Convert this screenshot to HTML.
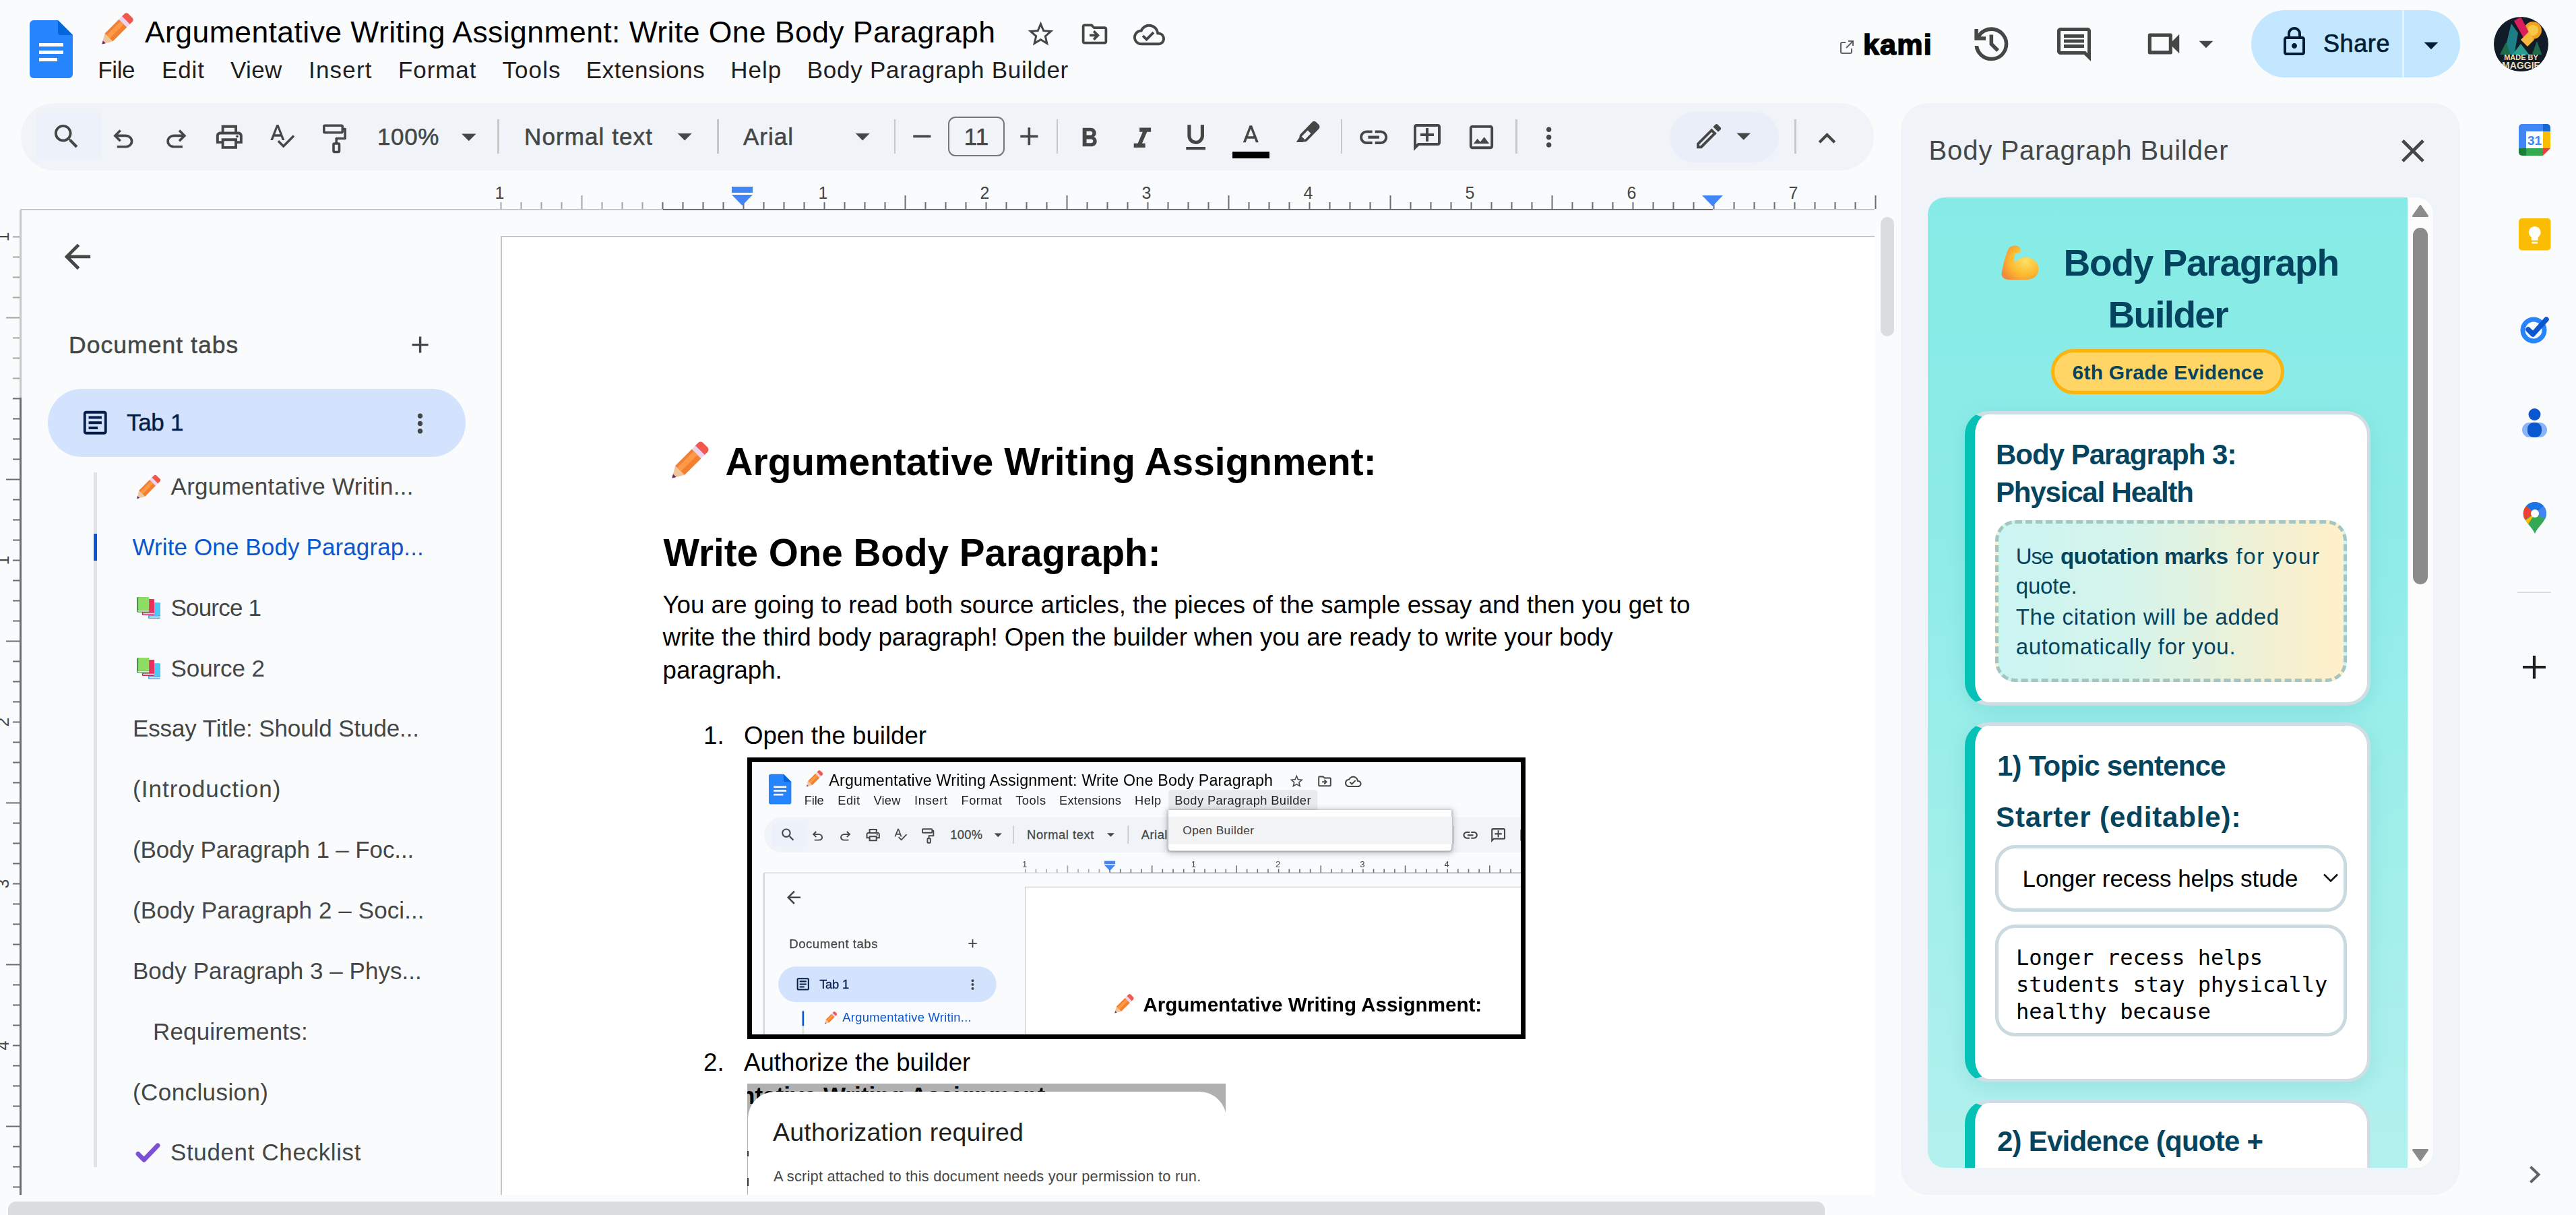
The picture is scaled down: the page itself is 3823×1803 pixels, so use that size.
<!DOCTYPE html>
<html lang="en">
<head>
<meta charset="utf-8">
<title>Argumentative Writing Assignment: Write One Body Paragraph - Google Docs</title>
<style>
*{box-sizing:border-box;margin:0;padding:0}
html,body{width:3823px;height:1803px;overflow:hidden;background:#f9fbfd}
body{font-family:"Liberation Sans",sans-serif;color:#444746;position:relative}
.abs{position:absolute}
.t{position:absolute;white-space:nowrap;line-height:1}
svg{position:absolute;display:block;overflow:visible}
.ic{fill:#444746}
/* header */
.title{left:215px;top:26px;font-size:44.5px;color:#000}
.menu{top:85.5px;font-size:35px;color:#1f1f1f}
/* toolbar */
.tb{left:31px;top:153px;width:2750px;height:100px;border-radius:50px;background:#f0f4f9}
.tbtxt{font-size:35px;color:#444746;top:185px;-webkit-text-stroke:.55px #444746}
.sep{position:absolute;top:177px;width:2.5px;height:51px;background:#c7c7c7}
/* ruler */
.rn{position:absolute;top:273.5px;margin-left:-2px;font-size:25px;color:#444746;line-height:1;transform:translateX(-50%)}
/* left panel */
.li{position:absolute;white-space:nowrap;line-height:1;font-size:35px;color:#444746}
/* doc */
.doc{font-family:"Liberation Sans",sans-serif;color:#000}
</style>
</head>
<body>
<!-- ===== HEADER ===== -->
<svg class="abs" style="left:44px;top:30px" width="64" height="86" viewBox="0 0 64 86">
  <path d="M6 0h36l22 22v58a6 6 0 0 1-6 6H6a6 6 0 0 1-6-6V6a6 6 0 0 1 6-6z" fill="#2684fc"/>
  <path d="M42 0l22 22H46a4 4 0 0 1-4-4z" fill="#0066da"/>
  <rect x="14" y="34" width="36" height="5" fill="#fff"/><rect x="14" y="45" width="36" height="5" fill="#fff"/><rect x="14" y="56" width="27" height="5" fill="#fff"/>
</svg>
<!-- pencil emoji -->
<svg style="left:146px;top:18px" width="53" height="53" viewBox="-4.5 -4.5 57 57"><g transform="rotate(45 24 24)"><rect x="15" y="-8" width="18" height="14" rx="4.5" fill="#f4574c"/><rect x="15" y="2" width="18" height="7" fill="#ead5f2"/><rect x="15" y="9" width="18" height="32" fill="#f47f2f"/><rect x="19" y="9" width="7" height="32" fill="#fc9a4a"/><path d="M15 41h18l-9 15z" fill="#f1c59b"/><path d="M21 51h6l-3 5z" fill="#5b2a6b"/></g></svg>
<div class="t title" style="letter-spacing:0.43px">Argumentative Writing Assignment: Write One Body Paragraph</div>
<svg class="ic" style="left:1522px;top:28px" width="45" height="45" viewBox="0 0 24 24"><path d="M22 9.24l-7.19-.62L12 2 9.19 8.63 2 9.24l5.46 4.73L5.82 21 12 17.27 18.18 21l-1.63-7.03L22 9.24zM12 15.4l-3.76 2.27 1-4.28-3.32-2.88 4.38-.38L12 6.1l1.71 4.04 4.38.38-3.32 2.88 1 4.28L12 15.4z"/></svg>
<svg class="ic" style="left:1602px;top:28px" width="45" height="45" viewBox="0 0 24 24"><path d="M20 6h-8l-2-2H4c-1.1 0-2 .9-2 2v12c0 1.1.9 2 2 2h16c1.1 0 2-.9 2-2V8c0-1.1-.9-2-2-2zm0 12H4V6h5.17l2 2H20v10zm-7.84-4H8v-2h4.16l-1.59-1.59L11.99 9 16 13.01 11.99 17l-1.41-1.41L12.16 14z"/></svg>
<svg class="ic" style="left:1682px;top:28px" width="47" height="47" viewBox="0 0 24 24"><path d="M19.35 10.04C18.67 6.59 15.64 4 12 4 9.11 4 6.6 5.64 5.35 8.04 2.34 8.36 0 10.91 0 14c0 3.31 2.69 6 6 6h13c2.76 0 5-2.24 5-5 0-2.64-2.05-4.78-4.65-4.96zM19 18H6c-2.21 0-4-1.79-4-4 0-2.05 1.53-3.76 3.56-3.97l1.07-.11.5-.95C8.08 7.14 9.94 6 12 6c2.62 0 4.88 1.86 5.39 4.43l.3 1.5 1.53.11c1.56.1 2.78 1.41 2.78 2.96 0 1.65-1.35 3-3 3zm-9-3.82l-2.09-2.09L6.5 13.5 10 17l6.01-6.01-1.41-1.41z"/></svg>
<div class="t menu" style="left:145.3px;letter-spacing:-0.40px">File</div>
<div class="t menu" style="left:240px;letter-spacing:0.90px">Edit</div>
<div class="t menu" style="left:342px;letter-spacing:0.36px">View</div>
<div class="t menu" style="left:458px;letter-spacing:1.21px">Insert</div>
<div class="t menu" style="left:591px;letter-spacing:0.91px">Format</div>
<div class="t menu" style="left:745.5px;letter-spacing:1.07px">Tools</div>
<div class="t menu" style="left:869.7px;letter-spacing:0.55px">Extensions</div>
<div class="t menu" style="left:1084.3px;letter-spacing:1.01px">Help</div>
<div class="t menu" style="left:1197.7px;letter-spacing:0.76px">Body Paragraph Builder</div>
<!-- right side of header -->
<svg style="left:2729px;top:58px" width="24" height="24" viewBox="0 0 24 24"><path d="M10 5H5a2 2 0 0 0-2 2v12a2 2 0 0 0 2 2h12a2 2 0 0 0 2-2v-5M14 3h7v7M21 3l-10 10" fill="none" stroke="#5f6368" stroke-width="2"/></svg>
<div class="t" style="left:2765px;top:45px;font-size:43px;font-weight:700;color:#000;letter-spacing:1.2px;-webkit-text-stroke:1.6px #000">kami</div>
<svg class="ic" style="left:2921.7px;top:31.7px" width="66.7" height="66.7" viewBox="0 0 24 24"><path d="M12 21q-3.45 0-6.012-2.287T3.05 13H5.1q.35 2.6 2.313 4.3T12 19q2.925 0 4.963-2.037T19 12q0-2.925-2.037-4.962T12 5q-1.725 0-3.225.8T6.25 8H9v2H3V4h2v2.35q1.275-1.6 3.113-2.475T12 3q1.875 0 3.513.713t2.85 1.924q1.212 1.213 1.925 2.85T21 12q0 1.875-.712 3.513t-1.925 2.85q-1.213 1.212-2.85 1.925T12 21Zm2.8-4.8L11 12.4V7h2v4.6l3.2 3.2-1.4 1.4Z"/></svg>
<svg class="ic" style="left:3048px;top:36px" width="60" height="60" viewBox="0 0 24 24"><path d="M21.99 4c0-1.1-.89-2-1.99-2H4c-1.1 0-2 .9-2 2v12c0 1.1.9 2 2 2h14l4 4-.01-18zM20 4v13.17L18.83 16H4V4h16zM6 12h12v2H6zm0-3h12v2H6zm0-3h12v2H6z"/></svg>
<svg class="ic" style="left:3180px;top:34px" width="62" height="62" viewBox="0 0 24 24"><path d="M15 8v8H5V8h10m1-2H4c-.55 0-1 .45-1 1v10c0 .55.45 1 1 1h12c.55 0 1-.45 1-1v-3.5l4 4v-11l-4 4V7c0-.55-.45-1-1-1z"/></svg>
<svg class="ic" style="left:3249px;top:40px" width="50" height="50" viewBox="0 0 24 24"><path d="M7 10l5 5 5-5z"/></svg>
<div class="abs" style="left:3341px;top:15px;width:310px;height:100px;border-radius:50px;background:#c2e7ff"></div>
<div class="abs" style="left:3565px;top:15px;width:3px;height:100px;background:#e4f3ff"></div>
<svg style="left:3381px;top:38px;fill:#001d35" width="48" height="48" viewBox="0 0 24 24"><path d="M18 8h-1V6c0-2.76-2.24-5-5-5S7 3.24 7 6v2H6c-1.1 0-2 .9-2 2v10c0 1.1.9 2 2 2h12c1.1 0 2-.9 2-2V10c0-1.1-.9-2-2-2zM9 6c0-1.66 1.34-3 3-3s3 1.34 3 3v2H9V6zm9 14H6V10h12v10zm-6-3c1.1 0 2-.9 2-2s-.9-2-2-2-2 .9-2 2 .9 2 2 2z"/></svg>
<div class="t" style="left:3448px;top:47px;font-size:36px;color:#001d35;font-weight:400;letter-spacing:.6px;-webkit-text-stroke:.7px #001d35">Share</div>
<svg style="left:3583px;top:42px;fill:#001d35" width="50" height="50" viewBox="0 0 24 24"><path d="M7 10l5 5 5-5z"/></svg>
<!-- avatar -->
<svg class="abs" style="left:3701px;top:25px" width="81" height="81" viewBox="0 0 81 81">
  <defs><clipPath id="avc"><circle cx="40.5" cy="40.5" r="40.5"/></clipPath></defs>
  <g clip-path="url(#avc)">
    <rect width="81" height="81" fill="#121c28"/>
    <circle cx="58" cy="20" r="13" fill="#f2a01e"/><circle cx="58" cy="20" r="8" fill="#f7c948"/>
    <path d="M14 58L26 10l10 14-6 34z" fill="#1d7f86"/>
    <path d="M30 6l10-6 16 30-8 8z" fill="#d81e5b"/>
    <path d="M40 34l12-12 8 12-10 10z" fill="#f6b93b"/>
    <path d="M8 58l10-20 8 20zM56 58l8-22 8 22z" fill="#1f6b4a"/>
    <path d="M26 58l14-18 14 18z" fill="#2a9d8f"/>
    <path d="M0 56h81v25H0z" fill="#121c28"/>
    <text x="40.5" y="64" text-anchor="middle" font-family="Liberation Sans, sans-serif" font-weight="700" font-size="11" fill="#f0deb8">MADE BY</text>
    <text x="40.5" y="77" text-anchor="middle" font-family="Liberation Sans, sans-serif" font-weight="700" font-size="14" fill="#f0deb8">MAGGIE</text>
  </g>
</svg>
<!-- ===== TOOLBAR ===== -->
<div class="abs tb"></div>
<div class="abs" style="left:54px;top:167px;width:96px;height:70px;background:#edf1fa;border-radius:4px 0 0 4px"></div>
<svg style="left:75.3px;top:178.8px;fill:#444746" width="47.3" height="47.3" viewBox="0 0 24 24"><path d="M15.5 14h-.79l-.28-.27C15.41 12.59 16 11.11 16 9.5 16 5.91 13.09 3 9.5 3S3 5.91 3 9.5 5.91 16 9.5 16c1.61 0 3.09-.59 4.23-1.57l.27.28v.79l5 4.99L20.49 19l-4.99-5zm-6 0C7.01 14 5 11.99 5 9.5S7.01 5 9.5 5 14 7.01 14 9.5 11.99 14 9.5 14z"/></svg>
<svg style="left:160.9px;top:184.5px;fill:#444746" width="43.7" height="43.7" viewBox="0 0 24 24"><path d="M7 19v-2h7.1q1.575 0 2.738-1T18 13.5q0-1.5-1.163-2.5T14.1 10H7.8l2.6 2.6L9 14 4 9l5-5 1.4 1.4L7.8 8h6.3q2.425 0 4.163 1.575T20 13.5q0 2.35-1.738 3.925T14.1 19H7Z"/></svg>
<svg style="left:239.9px;top:184.5px;fill:#444746" width="43.7" height="43.7" viewBox="0 0 24 24"><path d="M17 19v-2H9.9q-1.575 0-2.738-1T6 13.5q0-1.5 1.162-2.5T9.9 10h6.3l-2.6 2.6L15 14l5-5-5-5-1.4 1.4L16.2 8H9.9Q7.475 8 5.738 9.575T4 13.5q0 2.35 1.738 3.925T9.9 19H17Z"/></svg>
<svg style="left:317.1px;top:180.1px;fill:#444746" width="46.7" height="46.7" viewBox="0 0 24 24"><path d="M19 8h-1V3H6v5H5c-1.66 0-3 1.34-3 3v6h4v4h12v-4h4v-6c0-1.66-1.34-3-3-3zM8 5h8v3H8V5zm8 14H8v-4h8v4zm2-4v-2H6v2H4v-4c0-.55.45-1 1-1h14c.55 0 1 .45 1 1v4h-2z M17 11.5a1 1 0 1 0 2 0a1 1 0 1 0-2 0z"/></svg>
<svg style="left:396.7px;top:180.2px;fill:#444746" width="42.0" height="42.0" viewBox="0 0 24 24"><path d="M12.45 16h2.09L9.43 3H7.57L2.46 16h2.09l1.12-3h5.64l1.14 3zm-6.02-5L8.5 5.48 10.57 11H6.43zm15.16.59l-8.09 8.09L9.83 16l-1.41 1.41 5.09 5.09L23 13l-1.41-1.41z"/></svg>
<svg style="left:476px;top:182px" width="42" height="48" viewBox="0 0 42 48"><g fill="none" stroke="#444746" stroke-width="3.6" stroke-linejoin="round"><rect x="4.8" y="4.3" width="27.5" height="10.5" rx="1.5"/><path d="M32.3 9.5H36.2V23.5H23.2V30"/><rect x="19" y="31" width="8.5" height="12.5" rx="1.5"/></g></svg>
<div class="t tbtxt" style="left:560px;letter-spacing:.6px">100%</div>
<svg style="left:669.7px;top:176.6px;fill:#444746" width="51.6" height="51.6" viewBox="0 0 24 24"><path d="M7 10l5 5 5-5z"/></svg>
<div class="sep" style="left:738px"></div>
<div class="t tbtxt" style="left:778px;letter-spacing:1.1px">Normal text</div>
<svg style="left:990.8px;top:177.2px;fill:#444746" width="50.4" height="50.4" viewBox="0 0 24 24"><path d="M7 10l5 5 5-5z"/></svg>
<div class="sep" style="left:1064px"></div>
<div class="t tbtxt" style="left:1103px;letter-spacing:1px">Arial</div>
<svg style="left:1254.8px;top:177.2px;fill:#444746" width="50.4" height="50.4" viewBox="0 0 24 24"><path d="M7 10l5 5 5-5z"/></svg>
<div class="sep" style="left:1326.5px"></div>
<svg style="left:1345.7px;top:179.5px;fill:#444746" width="44.6" height="44.6" viewBox="0 0 24 24"><path d="M19 13H5v-2h14v2z"/></svg>
<div class="abs" style="left:1407px;top:173px;width:84px;height:58.5px;border:2.5px solid #747775;border-radius:11px"></div>
<div class="t tbtxt" style="left:1407px;width:84px;text-align:center">11</div>
<svg style="left:1504.7px;top:179.7px;fill:#444746" width="44.6" height="44.6" viewBox="0 0 24 24"><path d="M19 13h-6v6h-2v-6H5v-2h6V5h2v6h6v2z"/></svg>
<div class="sep" style="left:1567.5px"></div>
<svg style="left:1593.1px;top:181.5px;fill:#444746" width="46.9" height="46.9" viewBox="0 0 24 24"><path d="M15.6 10.79c.97-.67 1.65-1.77 1.65-2.79 0-2.26-1.75-4-4-4H7v14h7.04c2.09 0 3.71-1.7 3.71-3.79 0-1.52-.86-2.82-2.15-3.42zM10 6.5h3c.83 0 1.5.67 1.5 1.5s-.67 1.5-1.5 1.5h-3v-3zm3.5 9H10v-3h3.5c.83 0 1.5.67 1.5 1.5s-.67 1.5-1.5 1.5z"/></svg>
<svg style="left:1670.4px;top:180.5px;fill:#444746" width="50.8" height="50.8" viewBox="0 0 24 24"><path d="M10 4v3h2.21l-3.42 8H6v3h8v-3h-2.21l3.42-8H18V4z"/></svg>
<svg style="left:1750.1px;top:179.4px;fill:#444746" width="49.3" height="49.3" viewBox="0 0 24 24"><path d="M12 17c3.31 0 6-2.69 6-6V3h-2.5v8c0 1.93-1.57 3.5-3.5 3.5S8.5 12.93 8.5 11V3H6v8c0 3.31 2.69 6 6 6zm-7 2v2h14v-2H5z"/></svg>
<svg style="left:1835.4px;top:181.0px;fill:#444746" width="42.6" height="42.6" viewBox="0 0 24 24"><path d="M11 3L5.5 17h2.25l1.12-3h6.25l1.12 3h2.25L13 3h-2zm-1.38 9L12 5.67 14.38 12H9.62z"/></svg>
<div class="abs" style="left:1829px;top:224.5px;width:55px;height:10px;background:#000"></div>
<svg style="left:1900px;top:165px" width="80" height="70" viewBox="0 0 80 70"><path d="M23.7 46H34.2L35.5 43 29 38z" fill="#444746"/><g transform="rotate(-45.9 43.5 30.25)"><rect x="26.6" y="23.15" width="33.8" height="14.2" rx="4.5" fill="#444746"/><rect x="30.1" y="27" width="12.8" height="6.5" fill="#f0f4f9"/></g></svg>
<div class="sep" style="left:1989.5px"></div>
<svg style="left:2014.3px;top:179.4px;fill:#444746" width="49.3" height="49.3" viewBox="0 0 24 24"><path d="M3.9 12c0-1.71 1.39-3.1 3.1-3.1h4V7H7c-2.76 0-5 2.24-5 5s2.24 5 5 5h4v-1.9H7c-1.71 0-3.1-1.39-3.1-3.1zM8 13h8v-2H8v2zm9-6h-4v1.9h4c1.71 0 3.1 1.39 3.1 3.1s-1.39 3.1-3.1 3.1h-4V17h4c2.76 0 5-2.24 5-5s-2.24-5-5-5z"/></svg>
<svg style="left:2094.0px;top:180.0px;fill:#444746" width="48.0" height="48.0" viewBox="0 0 24 24"><path d="M2 4c0-1.1.9-2 2-2h16c1.1 0 2 .9 2 2v12c0 1.1-.9 2-2 2H6l-4 4V4zm2 13.17L5.17 16H20V4H4v13.17zM11 5h2v4h4v2h-4v4h-2v-4H7V9h4z"/></svg>
<svg style="left:2174.8px;top:180.2px;fill:#444746" width="47.0" height="47.0" viewBox="0 0 24 24"><path d="M19 5v14H5V5h14m0-2H5c-1.1 0-2 .9-2 2v14c0 1.1.9 2 2 2h14c1.1 0 2-.9 2-2V5c0-1.1-.9-2-2-2zm-4.86 8.86l-3 3.87L9 13.14 6 17h12l-3.86-5.14z"/></svg>
<div class="sep" style="left:2249px"></div>
<svg style="left:2275.9px;top:181.2px;fill:#444746" width="45.3" height="45.3" viewBox="0 0 24 24"><path d="M12 8c1.1 0 2-.9 2-2s-.9-2-2-2-2 .9-2 2 .9 2 2 2zm0 2c-1.1 0-2 .9-2 2s.9 2 2 2 2-.9 2-2-.9-2-2-2zm0 6c-1.1 0-2 .9-2 2s.9 2 2 2 2-.9 2-2-.9-2-2-2z"/></svg>
<div class="abs" style="left:2478px;top:165.5px;width:162px;height:75px;border-radius:38px;background:#e9eef9"></div>
<svg style="left:2512.0px;top:177.9px;fill:#444746" width="48.2" height="48.2" viewBox="0 0 24 24"><path d="M14.06 9.02l.92.92L5.92 19H5v-.92l9.06-9.06M17.66 3c-.25 0-.51.1-.7.29l-1.83 1.83 3.75 3.75 1.83-1.83c.39-.39.39-1.02 0-1.41l-2.34-2.34c-.2-.2-.45-.29-.71-.29zm-3.6 3.19L3 17.25V21h3.75L17.81 9.94l-3.75-3.75z"/></svg>
<svg style="left:2563.0px;top:177.0px;fill:#444746" width="49.4" height="49.4" viewBox="0 0 24 24"><path d="M7 10l5 5 5-5z"/></svg>
<div class="sep" style="left:2663px"></div>
<svg style="left:2686.4px;top:180.1px;fill:#444746" width="51.0" height="51.0" viewBox="0 0 24 24"><path d="M12 8l-6 6 1.41 1.41L12 10.83l4.59 4.58L18 14z"/></svg>
<!-- ===== RULERS ===== -->
<div class="abs" style="left:30px;top:309.5px;width:953.5px;height:2.5px;background:#c4c7c5"></div>
<div class="abs" style="left:983.5px;top:309.5px;width:1558.0px;height:2.5px;background:#6b6e6c"></div>
<div class="abs" style="left:2541.5px;top:309.5px;width:240.5px;height:2.5px;background:#c4c7c5"></div>
<svg style="left:0;top:0" width="2800" height="320" viewBox="0 0 2800 320"><rect x="742.5" y="300" width="2" height="10" fill="#a3a6a4"/><rect x="772.5" y="300" width="2" height="10" fill="#a3a6a4"/><rect x="802.5" y="300" width="2" height="10" fill="#a3a6a4"/><rect x="832.5" y="300" width="2" height="10" fill="#a3a6a4"/><rect x="862.5" y="290" width="2" height="20" fill="#a3a6a4"/><rect x="892.5" y="300" width="2" height="10" fill="#a3a6a4"/><rect x="922.5" y="300" width="2" height="10" fill="#a3a6a4"/><rect x="952.5" y="300" width="2" height="10" fill="#a3a6a4"/><rect x="982.5" y="300" width="2" height="10" fill="#6b6e6c"/><rect x="1012.5" y="300" width="2" height="10" fill="#6b6e6c"/><rect x="1042.5" y="300" width="2" height="10" fill="#6b6e6c"/><rect x="1072.5" y="300" width="2" height="10" fill="#6b6e6c"/><rect x="1102.5" y="290" width="2" height="20" fill="#6b6e6c"/><rect x="1132.5" y="300" width="2" height="10" fill="#6b6e6c"/><rect x="1162.5" y="300" width="2" height="10" fill="#6b6e6c"/><rect x="1192.5" y="300" width="2" height="10" fill="#6b6e6c"/><rect x="1222.5" y="300" width="2" height="10" fill="#6b6e6c"/><rect x="1252.5" y="300" width="2" height="10" fill="#6b6e6c"/><rect x="1282.5" y="300" width="2" height="10" fill="#6b6e6c"/><rect x="1312.5" y="300" width="2" height="10" fill="#6b6e6c"/><rect x="1342.5" y="290" width="2" height="20" fill="#6b6e6c"/><rect x="1372.5" y="300" width="2" height="10" fill="#6b6e6c"/><rect x="1402.5" y="300" width="2" height="10" fill="#6b6e6c"/><rect x="1432.5" y="300" width="2" height="10" fill="#6b6e6c"/><rect x="1462.5" y="300" width="2" height="10" fill="#6b6e6c"/><rect x="1492.5" y="300" width="2" height="10" fill="#6b6e6c"/><rect x="1522.5" y="300" width="2" height="10" fill="#6b6e6c"/><rect x="1552.5" y="300" width="2" height="10" fill="#6b6e6c"/><rect x="1582.5" y="290" width="2" height="20" fill="#6b6e6c"/><rect x="1612.5" y="300" width="2" height="10" fill="#6b6e6c"/><rect x="1642.5" y="300" width="2" height="10" fill="#6b6e6c"/><rect x="1672.5" y="300" width="2" height="10" fill="#6b6e6c"/><rect x="1702.5" y="300" width="2" height="10" fill="#6b6e6c"/><rect x="1732.5" y="300" width="2" height="10" fill="#6b6e6c"/><rect x="1762.5" y="300" width="2" height="10" fill="#6b6e6c"/><rect x="1792.5" y="300" width="2" height="10" fill="#6b6e6c"/><rect x="1822.5" y="290" width="2" height="20" fill="#6b6e6c"/><rect x="1852.5" y="300" width="2" height="10" fill="#6b6e6c"/><rect x="1882.5" y="300" width="2" height="10" fill="#6b6e6c"/><rect x="1912.5" y="300" width="2" height="10" fill="#6b6e6c"/><rect x="1942.5" y="300" width="2" height="10" fill="#6b6e6c"/><rect x="1972.5" y="300" width="2" height="10" fill="#6b6e6c"/><rect x="2002.5" y="300" width="2" height="10" fill="#6b6e6c"/><rect x="2032.5" y="300" width="2" height="10" fill="#6b6e6c"/><rect x="2062.5" y="290" width="2" height="20" fill="#6b6e6c"/><rect x="2092.5" y="300" width="2" height="10" fill="#6b6e6c"/><rect x="2122.5" y="300" width="2" height="10" fill="#6b6e6c"/><rect x="2152.5" y="300" width="2" height="10" fill="#6b6e6c"/><rect x="2182.5" y="300" width="2" height="10" fill="#6b6e6c"/><rect x="2212.5" y="300" width="2" height="10" fill="#6b6e6c"/><rect x="2242.5" y="300" width="2" height="10" fill="#6b6e6c"/><rect x="2272.5" y="300" width="2" height="10" fill="#6b6e6c"/><rect x="2302.5" y="290" width="2" height="20" fill="#6b6e6c"/><rect x="2332.5" y="300" width="2" height="10" fill="#6b6e6c"/><rect x="2362.5" y="300" width="2" height="10" fill="#6b6e6c"/><rect x="2392.5" y="300" width="2" height="10" fill="#6b6e6c"/><rect x="2422.5" y="300" width="2" height="10" fill="#6b6e6c"/><rect x="2452.5" y="300" width="2" height="10" fill="#6b6e6c"/><rect x="2482.5" y="300" width="2" height="10" fill="#6b6e6c"/><rect x="2512.5" y="300" width="2" height="10" fill="#6b6e6c"/><rect x="2542.5" y="290" width="2" height="20" fill="#6b6e6c"/><rect x="2572.5" y="300" width="2" height="10" fill="#6b6e6c"/><rect x="2602.5" y="300" width="2" height="10" fill="#6b6e6c"/><rect x="2632.5" y="300" width="2" height="10" fill="#6b6e6c"/><rect x="2662.5" y="300" width="2" height="10" fill="#6b6e6c"/><rect x="2692.5" y="300" width="2" height="10" fill="#6b6e6c"/><rect x="2722.5" y="300" width="2" height="10" fill="#6b6e6c"/><rect x="2752.5" y="300" width="2" height="10" fill="#6b6e6c"/><rect x="2782.5" y="290" width="2" height="20" fill="#6b6e6c"/></svg>
<div class="rn" style="left:743.5px">1</div>
<div class="rn" style="left:1223.5px">1</div>
<div class="rn" style="left:1463.5px">2</div>
<div class="rn" style="left:1703.5px">3</div>
<div class="rn" style="left:1943.5px">4</div>
<div class="rn" style="left:2183.5px">5</div>
<div class="rn" style="left:2423.5px">6</div>
<div class="rn" style="left:2663.5px">7</div>
<svg style="left:1086px;top:277px" width="31" height="28" viewBox="0 0 31 28"><rect width="31" height="9" fill="#4285f4"/><path d="M0 12h31L15.5 28z" fill="#4285f4"/></svg>
<svg style="left:2526px;top:289.5px" width="31" height="16" viewBox="0 0 31 16"><path d="M0 0h31L15.5 16z" fill="#4285f4"/></svg>
<div class="abs" style="left:29px;top:312px;width:2.5px;height:278px;background:#c4c7c5"></div>
<div class="abs" style="left:29px;top:590px;width:2.5px;height:1183px;background:#6b6e6c"></div>
<svg style="left:0;top:0" width="32" height="1780" viewBox="0 0 32 1780"><rect x="19" y="350.5" width="10" height="2" fill="#a3a6a4"/><rect x="19" y="380.5" width="10" height="2" fill="#a3a6a4"/><rect x="19" y="410.5" width="10" height="2" fill="#a3a6a4"/><rect x="19" y="440.5" width="10" height="2" fill="#a3a6a4"/><rect x="9" y="470.5" width="20" height="2" fill="#a3a6a4"/><rect x="19" y="500.5" width="10" height="2" fill="#a3a6a4"/><rect x="19" y="530.5" width="10" height="2" fill="#a3a6a4"/><rect x="19" y="560.5" width="10" height="2" fill="#a3a6a4"/><rect x="19" y="590.5" width="10" height="2" fill="#6b6e6c"/><rect x="19" y="620.5" width="10" height="2" fill="#6b6e6c"/><rect x="19" y="650.5" width="10" height="2" fill="#6b6e6c"/><rect x="19" y="680.5" width="10" height="2" fill="#6b6e6c"/><rect x="9" y="710.5" width="20" height="2" fill="#6b6e6c"/><rect x="19" y="740.5" width="10" height="2" fill="#6b6e6c"/><rect x="19" y="770.5" width="10" height="2" fill="#6b6e6c"/><rect x="19" y="800.5" width="10" height="2" fill="#6b6e6c"/><rect x="19" y="830.5" width="10" height="2" fill="#6b6e6c"/><rect x="19" y="860.5" width="10" height="2" fill="#6b6e6c"/><rect x="19" y="890.5" width="10" height="2" fill="#6b6e6c"/><rect x="19" y="920.5" width="10" height="2" fill="#6b6e6c"/><rect x="9" y="950.5" width="20" height="2" fill="#6b6e6c"/><rect x="19" y="980.5" width="10" height="2" fill="#6b6e6c"/><rect x="19" y="1010.5" width="10" height="2" fill="#6b6e6c"/><rect x="19" y="1040.5" width="10" height="2" fill="#6b6e6c"/><rect x="19" y="1070.5" width="10" height="2" fill="#6b6e6c"/><rect x="19" y="1100.5" width="10" height="2" fill="#6b6e6c"/><rect x="19" y="1130.5" width="10" height="2" fill="#6b6e6c"/><rect x="19" y="1160.5" width="10" height="2" fill="#6b6e6c"/><rect x="9" y="1190.5" width="20" height="2" fill="#6b6e6c"/><rect x="19" y="1220.5" width="10" height="2" fill="#6b6e6c"/><rect x="19" y="1250.5" width="10" height="2" fill="#6b6e6c"/><rect x="19" y="1280.5" width="10" height="2" fill="#6b6e6c"/><rect x="19" y="1310.5" width="10" height="2" fill="#6b6e6c"/><rect x="19" y="1340.5" width="10" height="2" fill="#6b6e6c"/><rect x="19" y="1370.5" width="10" height="2" fill="#6b6e6c"/><rect x="19" y="1400.5" width="10" height="2" fill="#6b6e6c"/><rect x="9" y="1430.5" width="20" height="2" fill="#6b6e6c"/><rect x="19" y="1460.5" width="10" height="2" fill="#6b6e6c"/><rect x="19" y="1490.5" width="10" height="2" fill="#6b6e6c"/><rect x="19" y="1520.5" width="10" height="2" fill="#6b6e6c"/><rect x="19" y="1550.5" width="10" height="2" fill="#6b6e6c"/><rect x="19" y="1580.5" width="10" height="2" fill="#6b6e6c"/><rect x="19" y="1610.5" width="10" height="2" fill="#6b6e6c"/><rect x="19" y="1640.5" width="10" height="2" fill="#6b6e6c"/><rect x="9" y="1670.5" width="20" height="2" fill="#6b6e6c"/><rect x="19" y="1700.5" width="10" height="2" fill="#6b6e6c"/><rect x="19" y="1730.5" width="10" height="2" fill="#6b6e6c"/><rect x="19" y="1760.5" width="10" height="2" fill="#6b6e6c"/></svg>
<div class="abs" style="left:-8px;top:339.0px;width:25px;height:25px;font-size:25px;line-height:25px;text-align:center;color:#444746;transform:rotate(-90deg)">1</div>
<div class="abs" style="left:-8px;top:819.0px;width:25px;height:25px;font-size:25px;line-height:25px;text-align:center;color:#444746;transform:rotate(-90deg)">1</div>
<div class="abs" style="left:-8px;top:1059.0px;width:25px;height:25px;font-size:25px;line-height:25px;text-align:center;color:#444746;transform:rotate(-90deg)">2</div>
<div class="abs" style="left:-8px;top:1299.0px;width:25px;height:25px;font-size:25px;line-height:25px;text-align:center;color:#444746;transform:rotate(-90deg)">3</div>
<div class="abs" style="left:-8px;top:1539.0px;width:25px;height:25px;font-size:25px;line-height:25px;text-align:center;color:#444746;transform:rotate(-90deg)">4</div>
<!-- ===== LEFT PANEL ===== -->
<svg style="left:85.6px;top:352.1px;fill:#444746" width="57.8" height="57.8" viewBox="0 0 24 24"><path d="M20 11H7.83l5.59-5.59L12 4l-8 8 8 8 1.41-1.41L7.83 13H20v-2z"/></svg>
<div class="li" style="left:102px;top:494.5px;font-size:35.5px;-webkit-text-stroke:.5px #444746;letter-spacing:1.05px">Document tabs</div>
<svg style="left:603.1px;top:491.4px;fill:#444746" width="41.2" height="41.2" viewBox="0 0 24 24"><path d="M19 13h-6v6h-2v-6H5v-2h6V5h2v6h6v2z"/></svg>
<div class="abs" style="left:71px;top:576.5px;width:620px;height:101px;border-radius:51px;background:#d3e3fd"></div>
<svg style="left:117.8px;top:603.8px;fill:#041e49" width="46.5" height="46.5" viewBox="0 0 24 24"><path d="M19 5v14H5V5h14m0-2H5c-1.1 0-2 .9-2 2v14c0 1.1.9 2 2 2h14c1.1 0 2-.9 2-2V5c0-1.1-.9-2-2-2zm-2 4H7v2h10V7zm0 4H7v2h10v-2zm-3 4H7v2h7v-2z"/></svg>
<div class="li" style="left:188px;top:609px;font-size:35px;color:#041e49;-webkit-text-stroke:.5px #041e49;letter-spacing:-.3px">Tab 1</div>
<svg style="left:600.5px;top:605.5px;fill:#444746" width="45.0" height="45.0" viewBox="0 0 24 24"><path d="M12 8c1.1 0 2-.9 2-2s-.9-2-2-2-2 .9-2 2 .9 2 2 2zm0 2c-1.1 0-2 .9-2 2s.9 2 2 2 2-.9 2-2-.9-2-2-2zm0 6c-1.1 0-2 .9-2 2s.9 2 2 2 2-.9 2-2-.9-2-2-2z"/></svg>
<div class="abs" style="left:139px;top:701px;width:5px;height:1031px;background:#e3e3e3"></div>
<div class="abs" style="left:139px;top:792px;width:5px;height:40px;background:#0b57d0"></div>
<svg style="left:199px;top:703.6px" width="40" height="40" viewBox="-4.5 -4.5 57 57"><g transform="rotate(45 24 24)"><rect x="15" y="-8" width="18" height="14" rx="4.5" fill="#f4574c"/><rect x="15" y="2" width="18" height="7" fill="#ead5f2"/><rect x="15" y="9" width="18" height="32" fill="#f47f2f"/><rect x="19" y="9" width="7" height="32" fill="#fc9a4a"/><path d="M15 41h18l-9 15z" fill="#f1c59b"/><path d="M21 51h6l-3 5z" fill="#5b2a6b"/></g></svg>
<div class="li" style="left:253.5px;top:704.0px;color:#444746;letter-spacing:0.30px">Argumentative Writin...</div>
<div class="li" style="left:196.5px;top:793.8px;color:#0b57d0;letter-spacing:0.12px">Write One Body Paragrap...</div>
<svg style="left:203px;top:886.32px" width="35" height="32.0" viewBox="0 0 35 32"><rect x="17" y="8.4" width="18" height="23.5" rx="1.5" fill="#35b0f2"/><rect x="19" y="8.4" width="16" height="19" rx="1.2" fill="#4cc9f4"/><rect x="18.5" y="28.6" width="16.5" height="2" fill="#e9dcf8"/><rect x="7.8" y="3.1" width="18.2" height="23.9" rx="1.5" fill="#c5245a"/><rect x="9.5" y="3.1" width="16.5" height="19.6" rx="1.2" fill="#e8315f"/><rect x="9.3" y="23.6" width="16.7" height="2" fill="#f3cfe0"/><rect x="0" y="0" width="18.2" height="22.8" rx="1.5" fill="#3f9b4b"/><rect x="2.2" y="0" width="16" height="19" rx="1" fill="#8fdc62"/><rect x="1.5" y="19.6" width="16.7" height="2" fill="#e3efe0"/></svg>
<div class="li" style="left:253.5px;top:883.7px;color:#444746;letter-spacing:-0.81px">Source 1</div>
<svg style="left:203px;top:976.1800000000001px" width="35" height="32.0" viewBox="0 0 35 32"><rect x="17" y="8.4" width="18" height="23.5" rx="1.5" fill="#35b0f2"/><rect x="19" y="8.4" width="16" height="19" rx="1.2" fill="#4cc9f4"/><rect x="18.5" y="28.6" width="16.5" height="2" fill="#e9dcf8"/><rect x="7.8" y="3.1" width="18.2" height="23.9" rx="1.5" fill="#c5245a"/><rect x="9.5" y="3.1" width="16.5" height="19.6" rx="1.2" fill="#e8315f"/><rect x="9.3" y="23.6" width="16.7" height="2" fill="#f3cfe0"/><rect x="0" y="0" width="18.2" height="22.8" rx="1.5" fill="#3f9b4b"/><rect x="2.2" y="0" width="16" height="19" rx="1" fill="#8fdc62"/><rect x="1.5" y="19.6" width="16.7" height="2" fill="#e3efe0"/></svg>
<div class="li" style="left:253.5px;top:973.6px;color:#444746;letter-spacing:-0.08px">Source 2</div>
<div class="li" style="left:197px;top:1063.4px;color:#444746;letter-spacing:-0.11px">Essay Title: Should Stude...</div>
<div class="li" style="left:197px;top:1153.3px;color:#444746;letter-spacing:1.02px">(Introduction)</div>
<div class="li" style="left:197px;top:1243.1px;color:#444746;letter-spacing:-0.12px">(Body Paragraph 1 – Foc...</div>
<div class="li" style="left:197px;top:1333.0px;color:#444746;letter-spacing:0.10px">(Body Paragraph 2 – Soci...</div>
<div class="li" style="left:197px;top:1422.9px;color:#444746;letter-spacing:0.03px">Body Paragraph 3 – Phys...</div>
<div class="li" style="left:227px;top:1512.7px;color:#444746;letter-spacing:0.17px">Requirements:</div>
<div class="li" style="left:197px;top:1602.6px;color:#444746;letter-spacing:0.41px">(Conclusion)</div>
<svg style="left:202px;top:1692.06px" width="35" height="35" viewBox="0 0 36 36"><path d="M3 21l9 9L33 8" fill="none" stroke="#7b4fd6" stroke-width="7" stroke-linecap="round" stroke-linejoin="round"/></svg>
<div class="li" style="left:253px;top:1692.4px;color:#444746;letter-spacing:0.63px">Student Checklist</div>
<!-- ===== DOCUMENT ===== -->
<div class="abs" style="left:742.5px;top:349.5px;width:2039px;height:1423px;background:#fff;border-left:2.5px solid #c4c7c5;border-top:2.5px solid #c4c7c5"></div>
<svg style="left:991px;top:654px" width="62" height="62" viewBox="-4.5 -4.5 57 57"><g transform="rotate(45 24 24)"><rect x="15" y="-8" width="18" height="14" rx="4.5" fill="#f4574c"/><rect x="15" y="2" width="18" height="7" fill="#ead5f2"/><rect x="15" y="9" width="18" height="32" fill="#f47f2f"/><rect x="19" y="9" width="7" height="32" fill="#fc9a4a"/><path d="M15 41h18l-9 15z" fill="#f1c59b"/><path d="M21 51h6l-3 5z" fill="#5b2a6b"/></g></svg>
<div class="t doc" id="h1" style="left:1076.5px;top:658px;font-size:56.67px;font-weight:700;letter-spacing:0.09px">Argumentative Writing Assignment:</div>
<div class="t doc" id="h2" style="left:984.5px;top:793px;font-size:56.67px;font-weight:700;letter-spacing:-0.03px">Write One Body Paragraph:</div>
<div class="t doc" id="p0" style="left:983.5px;top:879.5px;font-size:36.67px">You are going to read both source articles, the pieces of the sample essay and then you get to</div>
<div class="t doc" id="p1" style="left:983.5px;top:928.1px;font-size:36.67px">write the third body paragraph! Open the builder when you are ready to write your body</div>
<div class="t doc" id="p2" style="left:983.5px;top:976.7px;font-size:36.67px">paragraph.</div>
<div class="t doc" style="left:1044px;top:1073.5px;font-size:36.67px">1.</div>
<div class="t doc" style="left:1104px;top:1073.5px;font-size:36.67px">Open the builder</div>
<div class="abs" style="left:1116px;top:1131px;width:1141px;height:404px;overflow:hidden;background:#f9fbfd"><div class="abs" style="left:1.8px;top:1.8px;width:2400px;height:900px;transform:scale(.522);transform-origin:0 0"><div class="abs" style="left:1180px;top:75px;width:424px;height:58px;background:#e8eaed;border-radius:8px 8px 0 0"></div><!-- ===== HEADER ===== -->
<svg class="abs" style="left:44px;top:30px" width="64" height="86" viewBox="0 0 64 86">
  <path d="M6 0h36l22 22v58a6 6 0 0 1-6 6H6a6 6 0 0 1-6-6V6a6 6 0 0 1 6-6z" fill="#2684fc"/>
  <path d="M42 0l22 22H46a4 4 0 0 1-4-4z" fill="#0066da"/>
  <rect x="14" y="34" width="36" height="5" fill="#fff"/><rect x="14" y="45" width="36" height="5" fill="#fff"/><rect x="14" y="56" width="27" height="5" fill="#fff"/>
</svg>
<!-- pencil emoji -->
<svg style="left:146px;top:18px" width="53" height="53" viewBox="-4.5 -4.5 57 57"><g transform="rotate(45 24 24)"><rect x="15" y="-8" width="18" height="14" rx="4.5" fill="#f4574c"/><rect x="15" y="2" width="18" height="7" fill="#ead5f2"/><rect x="15" y="9" width="18" height="32" fill="#f47f2f"/><rect x="19" y="9" width="7" height="32" fill="#fc9a4a"/><path d="M15 41h18l-9 15z" fill="#f1c59b"/><path d="M21 51h6l-3 5z" fill="#5b2a6b"/></g></svg>
<div class="t title" style="letter-spacing:0.43px">Argumentative Writing Assignment: Write One Body Paragraph</div>
<svg class="ic" style="left:1522px;top:28px" width="45" height="45" viewBox="0 0 24 24"><path d="M22 9.24l-7.19-.62L12 2 9.19 8.63 2 9.24l5.46 4.73L5.82 21 12 17.27 18.18 21l-1.63-7.03L22 9.24zM12 15.4l-3.76 2.27 1-4.28-3.32-2.88 4.38-.38L12 6.1l1.71 4.04 4.38.38-3.32 2.88 1 4.28L12 15.4z"/></svg>
<svg class="ic" style="left:1602px;top:28px" width="45" height="45" viewBox="0 0 24 24"><path d="M20 6h-8l-2-2H4c-1.1 0-2 .9-2 2v12c0 1.1.9 2 2 2h16c1.1 0 2-.9 2-2V8c0-1.1-.9-2-2-2zm0 12H4V6h5.17l2 2H20v10zm-7.84-4H8v-2h4.16l-1.59-1.59L11.99 9 16 13.01 11.99 17l-1.41-1.41L12.16 14z"/></svg>
<svg class="ic" style="left:1682px;top:28px" width="47" height="47" viewBox="0 0 24 24"><path d="M19.35 10.04C18.67 6.59 15.64 4 12 4 9.11 4 6.6 5.64 5.35 8.04 2.34 8.36 0 10.91 0 14c0 3.31 2.69 6 6 6h13c2.76 0 5-2.24 5-5 0-2.64-2.05-4.78-4.65-4.96zM19 18H6c-2.21 0-4-1.79-4-4 0-2.05 1.53-3.76 3.56-3.97l1.07-.11.5-.95C8.08 7.14 9.94 6 12 6c2.62 0 4.88 1.86 5.39 4.43l.3 1.5 1.53.11c1.56.1 2.78 1.41 2.78 2.96 0 1.65-1.35 3-3 3zm-9-3.82l-2.09-2.09L6.5 13.5 10 17l6.01-6.01-1.41-1.41z"/></svg>
<div class="t menu" style="left:145.3px;letter-spacing:-0.40px">File</div>
<div class="t menu" style="left:240px;letter-spacing:0.90px">Edit</div>
<div class="t menu" style="left:342px;letter-spacing:0.36px">View</div>
<div class="t menu" style="left:458px;letter-spacing:1.21px">Insert</div>
<div class="t menu" style="left:591px;letter-spacing:0.91px">Format</div>
<div class="t menu" style="left:745.5px;letter-spacing:1.07px">Tools</div>
<div class="t menu" style="left:869.7px;letter-spacing:0.55px">Extensions</div>
<div class="t menu" style="left:1084.3px;letter-spacing:1.01px">Help</div>
<div class="t menu" style="left:1197.7px;letter-spacing:0.76px">Body Paragraph Builder</div>
<!-- ===== TOOLBAR ===== -->
<div class="abs tb"></div>
<div class="abs" style="left:54px;top:167px;width:96px;height:70px;background:#edf1fa;border-radius:4px 0 0 4px"></div>
<svg style="left:75.3px;top:178.8px;fill:#444746" width="47.3" height="47.3" viewBox="0 0 24 24"><path d="M15.5 14h-.79l-.28-.27C15.41 12.59 16 11.11 16 9.5 16 5.91 13.09 3 9.5 3S3 5.91 3 9.5 5.91 16 9.5 16c1.61 0 3.09-.59 4.23-1.57l.27.28v.79l5 4.99L20.49 19l-4.99-5zm-6 0C7.01 14 5 11.99 5 9.5S7.01 5 9.5 5 14 7.01 14 9.5 11.99 14 9.5 14z"/></svg>
<svg style="left:160.9px;top:184.5px;fill:#444746" width="43.7" height="43.7" viewBox="0 0 24 24"><path d="M7 19v-2h7.1q1.575 0 2.738-1T18 13.5q0-1.5-1.163-2.5T14.1 10H7.8l2.6 2.6L9 14 4 9l5-5 1.4 1.4L7.8 8h6.3q2.425 0 4.163 1.575T20 13.5q0 2.35-1.738 3.925T14.1 19H7Z"/></svg>
<svg style="left:239.9px;top:184.5px;fill:#444746" width="43.7" height="43.7" viewBox="0 0 24 24"><path d="M17 19v-2H9.9q-1.575 0-2.738-1T6 13.5q0-1.5 1.162-2.5T9.9 10h6.3l-2.6 2.6L15 14l5-5-5-5-1.4 1.4L16.2 8H9.9Q7.475 8 5.738 9.575T4 13.5q0 2.35 1.738 3.925T9.9 19H17Z"/></svg>
<svg style="left:317.1px;top:180.1px;fill:#444746" width="46.7" height="46.7" viewBox="0 0 24 24"><path d="M19 8h-1V3H6v5H5c-1.66 0-3 1.34-3 3v6h4v4h12v-4h4v-6c0-1.66-1.34-3-3-3zM8 5h8v3H8V5zm8 14H8v-4h8v4zm2-4v-2H6v2H4v-4c0-.55.45-1 1-1h14c.55 0 1 .45 1 1v4h-2z M17 11.5a1 1 0 1 0 2 0a1 1 0 1 0-2 0z"/></svg>
<svg style="left:396.7px;top:180.2px;fill:#444746" width="42.0" height="42.0" viewBox="0 0 24 24"><path d="M12.45 16h2.09L9.43 3H7.57L2.46 16h2.09l1.12-3h5.64l1.14 3zm-6.02-5L8.5 5.48 10.57 11H6.43zm15.16.59l-8.09 8.09L9.83 16l-1.41 1.41 5.09 5.09L23 13l-1.41-1.41z"/></svg>
<svg style="left:476px;top:182px" width="42" height="48" viewBox="0 0 42 48"><g fill="none" stroke="#444746" stroke-width="3.6" stroke-linejoin="round"><rect x="4.8" y="4.3" width="27.5" height="10.5" rx="1.5"/><path d="M32.3 9.5H36.2V23.5H23.2V30"/><rect x="19" y="31" width="8.5" height="12.5" rx="1.5"/></g></svg>
<div class="t tbtxt" style="left:560px;letter-spacing:.6px">100%</div>
<svg style="left:669.7px;top:176.6px;fill:#444746" width="51.6" height="51.6" viewBox="0 0 24 24"><path d="M7 10l5 5 5-5z"/></svg>
<div class="sep" style="left:738px"></div>
<div class="t tbtxt" style="left:778px;letter-spacing:1.1px">Normal text</div>
<svg style="left:990.8px;top:177.2px;fill:#444746" width="50.4" height="50.4" viewBox="0 0 24 24"><path d="M7 10l5 5 5-5z"/></svg>
<div class="sep" style="left:1064px"></div>
<div class="t tbtxt" style="left:1103px;letter-spacing:1px">Arial</div>
<svg style="left:1254.8px;top:177.2px;fill:#444746" width="50.4" height="50.4" viewBox="0 0 24 24"><path d="M7 10l5 5 5-5z"/></svg>
<div class="sep" style="left:1326.5px"></div>
<svg style="left:1345.7px;top:179.5px;fill:#444746" width="44.6" height="44.6" viewBox="0 0 24 24"><path d="M19 13H5v-2h14v2z"/></svg>
<div class="abs" style="left:1407px;top:173px;width:84px;height:58.5px;border:2.5px solid #747775;border-radius:11px"></div>
<div class="t tbtxt" style="left:1407px;width:84px;text-align:center">11</div>
<svg style="left:1504.7px;top:179.7px;fill:#444746" width="44.6" height="44.6" viewBox="0 0 24 24"><path d="M19 13h-6v6h-2v-6H5v-2h6V5h2v6h6v2z"/></svg>
<div class="sep" style="left:1567.5px"></div>
<svg style="left:1593.1px;top:181.5px;fill:#444746" width="46.9" height="46.9" viewBox="0 0 24 24"><path d="M15.6 10.79c.97-.67 1.65-1.77 1.65-2.79 0-2.26-1.75-4-4-4H7v14h7.04c2.09 0 3.71-1.7 3.71-3.79 0-1.52-.86-2.82-2.15-3.42zM10 6.5h3c.83 0 1.5.67 1.5 1.5s-.67 1.5-1.5 1.5h-3v-3zm3.5 9H10v-3h3.5c.83 0 1.5.67 1.5 1.5s-.67 1.5-1.5 1.5z"/></svg>
<svg style="left:1670.4px;top:180.5px;fill:#444746" width="50.8" height="50.8" viewBox="0 0 24 24"><path d="M10 4v3h2.21l-3.42 8H6v3h8v-3h-2.21l3.42-8H18V4z"/></svg>
<svg style="left:1750.1px;top:179.4px;fill:#444746" width="49.3" height="49.3" viewBox="0 0 24 24"><path d="M12 17c3.31 0 6-2.69 6-6V3h-2.5v8c0 1.93-1.57 3.5-3.5 3.5S8.5 12.93 8.5 11V3H6v8c0 3.31 2.69 6 6 6zm-7 2v2h14v-2H5z"/></svg>
<svg style="left:1835.4px;top:181.0px;fill:#444746" width="42.6" height="42.6" viewBox="0 0 24 24"><path d="M11 3L5.5 17h2.25l1.12-3h6.25l1.12 3h2.25L13 3h-2zm-1.38 9L12 5.67 14.38 12H9.62z"/></svg>
<div class="abs" style="left:1829px;top:224.5px;width:55px;height:10px;background:#000"></div>
<svg style="left:1900px;top:165px" width="80" height="70" viewBox="0 0 80 70"><path d="M23.7 46H34.2L35.5 43 29 38z" fill="#444746"/><g transform="rotate(-45.9 43.5 30.25)"><rect x="26.6" y="23.15" width="33.8" height="14.2" rx="4.5" fill="#444746"/><rect x="30.1" y="27" width="12.8" height="6.5" fill="#f0f4f9"/></g></svg>
<div class="sep" style="left:1989.5px"></div>
<svg style="left:2014.3px;top:179.4px;fill:#444746" width="49.3" height="49.3" viewBox="0 0 24 24"><path d="M3.9 12c0-1.71 1.39-3.1 3.1-3.1h4V7H7c-2.76 0-5 2.24-5 5s2.24 5 5 5h4v-1.9H7c-1.71 0-3.1-1.39-3.1-3.1zM8 13h8v-2H8v2zm9-6h-4v1.9h4c1.71 0 3.1 1.39 3.1 3.1s-1.39 3.1-3.1 3.1h-4V17h4c2.76 0 5-2.24 5-5s-2.24-5-5-5z"/></svg>
<svg style="left:2094.0px;top:180.0px;fill:#444746" width="48.0" height="48.0" viewBox="0 0 24 24"><path d="M2 4c0-1.1.9-2 2-2h16c1.1 0 2 .9 2 2v12c0 1.1-.9 2-2 2H6l-4 4V4zm2 13.17L5.17 16H20V4H4v13.17zM11 5h2v4h4v2h-4v4h-2v-4H7V9h4z"/></svg>
<svg style="left:2174.8px;top:180.2px;fill:#444746" width="47.0" height="47.0" viewBox="0 0 24 24"><path d="M19 5v14H5V5h14m0-2H5c-1.1 0-2 .9-2 2v14c0 1.1.9 2 2 2h14c1.1 0 2-.9 2-2V5c0-1.1-.9-2-2-2zm-4.86 8.86l-3 3.87L9 13.14 6 17h12l-3.86-5.14z"/></svg>
<div class="sep" style="left:2249px"></div>
<svg style="left:2275.9px;top:181.2px;fill:#444746" width="45.3" height="45.3" viewBox="0 0 24 24"><path d="M12 8c1.1 0 2-.9 2-2s-.9-2-2-2-2 .9-2 2 .9 2 2 2zm0 2c-1.1 0-2 .9-2 2s.9 2 2 2 2-.9 2-2-.9-2-2-2zm0 6c-1.1 0-2 .9-2 2s.9 2 2 2 2-.9 2-2-.9-2-2-2z"/></svg>
<div class="abs" style="left:2478px;top:165.5px;width:162px;height:75px;border-radius:38px;background:#e9eef9"></div>
<svg style="left:2512.0px;top:177.9px;fill:#444746" width="48.2" height="48.2" viewBox="0 0 24 24"><path d="M14.06 9.02l.92.92L5.92 19H5v-.92l9.06-9.06M17.66 3c-.25 0-.51.1-.7.29l-1.83 1.83 3.75 3.75 1.83-1.83c.39-.39.39-1.02 0-1.41l-2.34-2.34c-.2-.2-.45-.29-.71-.29zm-3.6 3.19L3 17.25V21h3.75L17.81 9.94l-3.75-3.75z"/></svg>
<svg style="left:2563.0px;top:177.0px;fill:#444746" width="49.4" height="49.4" viewBox="0 0 24 24"><path d="M7 10l5 5 5-5z"/></svg>
<div class="sep" style="left:2663px"></div>
<svg style="left:2686.4px;top:180.1px;fill:#444746" width="51.0" height="51.0" viewBox="0 0 24 24"><path d="M12 8l-6 6 1.41 1.41L12 10.83l4.59 4.58L18 14z"/></svg>
<div class="abs" style="left:30px;top:309.5px;width:983.5px;height:2.5px;background:#c4c7c5"></div><div class="abs" style="left:1013.5px;top:309.5px;width:1286.5px;height:2.5px;background:#6b6e6c"></div><svg style="left:0;top:0" width="2300" height="320" viewBox="0 0 2300 320"><rect x="772.0" y="300" width="3" height="10" fill="#a3a6a4"/><rect x="802.0" y="300" width="3" height="10" fill="#a3a6a4"/><rect x="832.0" y="300" width="3" height="10" fill="#a3a6a4"/><rect x="862.0" y="300" width="3" height="10" fill="#a3a6a4"/><rect x="892.0" y="290" width="3" height="20" fill="#a3a6a4"/><rect x="922.0" y="300" width="3" height="10" fill="#a3a6a4"/><rect x="952.0" y="300" width="3" height="10" fill="#a3a6a4"/><rect x="982.0" y="300" width="3" height="10" fill="#a3a6a4"/><rect x="1012.0" y="300" width="3" height="10" fill="#6b6e6c"/><rect x="1042.0" y="300" width="3" height="10" fill="#6b6e6c"/><rect x="1072.0" y="300" width="3" height="10" fill="#6b6e6c"/><rect x="1102.0" y="300" width="3" height="10" fill="#6b6e6c"/><rect x="1132.0" y="290" width="3" height="20" fill="#6b6e6c"/><rect x="1162.0" y="300" width="3" height="10" fill="#6b6e6c"/><rect x="1192.0" y="300" width="3" height="10" fill="#6b6e6c"/><rect x="1222.0" y="300" width="3" height="10" fill="#6b6e6c"/><rect x="1252.0" y="300" width="3" height="10" fill="#6b6e6c"/><rect x="1282.0" y="300" width="3" height="10" fill="#6b6e6c"/><rect x="1312.0" y="300" width="3" height="10" fill="#6b6e6c"/><rect x="1342.0" y="300" width="3" height="10" fill="#6b6e6c"/><rect x="1372.0" y="290" width="3" height="20" fill="#6b6e6c"/><rect x="1402.0" y="300" width="3" height="10" fill="#6b6e6c"/><rect x="1432.0" y="300" width="3" height="10" fill="#6b6e6c"/><rect x="1462.0" y="300" width="3" height="10" fill="#6b6e6c"/><rect x="1492.0" y="300" width="3" height="10" fill="#6b6e6c"/><rect x="1522.0" y="300" width="3" height="10" fill="#6b6e6c"/><rect x="1552.0" y="300" width="3" height="10" fill="#6b6e6c"/><rect x="1582.0" y="300" width="3" height="10" fill="#6b6e6c"/><rect x="1612.0" y="290" width="3" height="20" fill="#6b6e6c"/><rect x="1642.0" y="300" width="3" height="10" fill="#6b6e6c"/><rect x="1672.0" y="300" width="3" height="10" fill="#6b6e6c"/><rect x="1702.0" y="300" width="3" height="10" fill="#6b6e6c"/><rect x="1732.0" y="300" width="3" height="10" fill="#6b6e6c"/><rect x="1762.0" y="300" width="3" height="10" fill="#6b6e6c"/><rect x="1792.0" y="300" width="3" height="10" fill="#6b6e6c"/><rect x="1822.0" y="300" width="3" height="10" fill="#6b6e6c"/><rect x="1852.0" y="290" width="3" height="20" fill="#6b6e6c"/><rect x="1882.0" y="300" width="3" height="10" fill="#6b6e6c"/><rect x="1912.0" y="300" width="3" height="10" fill="#6b6e6c"/><rect x="1942.0" y="300" width="3" height="10" fill="#6b6e6c"/><rect x="1972.0" y="300" width="3" height="10" fill="#6b6e6c"/><rect x="2002.0" y="300" width="3" height="10" fill="#6b6e6c"/><rect x="2032.0" y="300" width="3" height="10" fill="#6b6e6c"/><rect x="2062.0" y="300" width="3" height="10" fill="#6b6e6c"/><rect x="2092.0" y="290" width="3" height="20" fill="#6b6e6c"/><rect x="2122.0" y="300" width="3" height="10" fill="#6b6e6c"/><rect x="2152.0" y="300" width="3" height="10" fill="#6b6e6c"/><rect x="2182.0" y="300" width="3" height="10" fill="#6b6e6c"/><rect x="2212.0" y="300" width="3" height="10" fill="#6b6e6c"/><rect x="2242.0" y="300" width="3" height="10" fill="#6b6e6c"/><rect x="2272.0" y="300" width="3" height="10" fill="#6b6e6c"/></svg><div class="rn" style="left:773.5px">1</div><div class="rn" style="left:1253.5px">1</div><div class="rn" style="left:1493.5px">2</div><div class="rn" style="left:1733.5px">3</div><div class="rn" style="left:1973.5px">4</div><div class="rn" style="left:2213.5px">5</div><svg style="left:998.0px;top:277px" width="31" height="28" viewBox="0 0 31 28"><rect width="31" height="9" fill="#4285f4"/><path d="M0 12h31L15.5 28z" fill="#4285f4"/></svg><div class="abs" style="left:29px;top:312px;width:2.5px;height:600px;background:#c4c7c5"></div><svg style="left:85.6px;top:352.1px;fill:#444746" width="57.8" height="57.8" viewBox="0 0 24 24"><path d="M20 11H7.83l5.59-5.59L12 4l-8 8 8 8 1.41-1.41L7.83 13H20v-2z"/></svg>
<div class="li" style="left:102px;top:494.5px;font-size:35.5px;-webkit-text-stroke:.5px #444746;letter-spacing:1.05px">Document tabs</div><svg style="left:603.1px;top:491.4px;fill:#444746" width="41.2" height="41.2" viewBox="0 0 24 24"><path d="M19 13h-6v6h-2v-6H5v-2h6V5h2v6h6v2z"/></svg>
<div class="abs" style="left:71px;top:576.5px;width:620px;height:101px;border-radius:51px;background:#d3e3fd"></div><svg style="left:117.8px;top:603.8px;fill:#041e49" width="46.5" height="46.5" viewBox="0 0 24 24"><path d="M19 5v14H5V5h14m0-2H5c-1.1 0-2 .9-2 2v14c0 1.1.9 2 2 2h14c1.1 0 2-.9 2-2V5c0-1.1-.9-2-2-2zm-2 4H7v2h10V7zm0 4H7v2h10v-2zm-3 4H7v2h7v-2z"/></svg>
<div class="li" style="left:188px;top:609px;font-size:35px;color:#041e49;-webkit-text-stroke:.5px #041e49;letter-spacing:-.3px">Tab 1</div><svg style="left:600.5px;top:605.5px;fill:#444746" width="45.0" height="45.0" viewBox="0 0 24 24"><path d="M12 8c1.1 0 2-.9 2-2s-.9-2-2-2-2 .9-2 2 .9 2 2 2zm0 2c-1.1 0-2 .9-2 2s.9 2 2 2 2-.9 2-2-.9-2-2-2zm0 6c-1.1 0-2 .9-2 2s.9 2 2 2 2-.9 2-2-.9-2-2-2z"/></svg>
<div class="abs" style="left:139px;top:701px;width:5px;height:200px;background:#e3e3e3"></div><div class="abs" style="left:139px;top:704px;width:5px;height:42px;background:#0b57d0"></div><svg style="left:199px;top:704px" width="40" height="40" viewBox="-4.5 -4.5 57 57"><g transform="rotate(45 24 24)"><rect x="15" y="-8" width="18" height="14" rx="4.5" fill="#f4574c"/><rect x="15" y="2" width="18" height="7" fill="#ead5f2"/><rect x="15" y="9" width="18" height="32" fill="#f47f2f"/><rect x="19" y="9" width="7" height="32" fill="#fc9a4a"/><path d="M15 41h18l-9 15z" fill="#f1c59b"/><path d="M21 51h6l-3 5z" fill="#5b2a6b"/></g></svg>
<div class="li" style="left:253.5px;top:704.4px;color:#0b57d0;letter-spacing:.6px">Argumentative Writin...</div><div class="abs" style="left:772px;top:350px;width:1600px;height:600px;background:#fff;border:2.5px solid #c4c7c5"></div><svg style="left:1021px;top:654px" width="62" height="62" viewBox="-4.5 -4.5 57 57"><g transform="rotate(45 24 24)"><rect x="15" y="-8" width="18" height="14" rx="4.5" fill="#f4574c"/><rect x="15" y="2" width="18" height="7" fill="#ead5f2"/><rect x="15" y="9" width="18" height="32" fill="#f47f2f"/><rect x="19" y="9" width="7" height="32" fill="#fc9a4a"/><path d="M15 41h18l-9 15z" fill="#f1c59b"/><path d="M21 51h6l-3 5z" fill="#5b2a6b"/></g></svg>
<div class="t doc" style="left:1108px;top:658px;font-size:56.67px;font-weight:700">Argumentative Writing Assignment:</div><div class="abs" style="left:1180px;top:132px;width:805px;height:116px;background:#fff;border-radius:0 0 8px 8px;box-shadow:0 4px 16px 4px rgba(60,64,67,.25),0 2px 6px rgba(60,64,67,.3)"></div><div class="abs" style="left:1180px;top:151px;width:805px;height:78px;background:#f1f3f4"></div><div class="t" style="left:1221px;top:174px;font-size:33px;color:#3c4043;letter-spacing:.9px">Open Builder</div></div></div><div class="abs" style="left:1109px;top:1124px;width:1154.5px;height:417.5px;border:7.5px solid #000"></div>
<div class="t doc" style="left:1044px;top:1558.5px;font-size:36.67px">2.</div>
<div class="t doc" style="left:1104px;top:1558.5px;font-size:36.67px">Authorize the builder</div>
<div class="abs" style="left:1109px;top:1608px;width:710px;height:164.5px;background:#b0b0b0;overflow:hidden"><div class="t doc" style="left:-10px;top:-0.5px;font-size:35px;font-weight:700;color:#000;letter-spacing:0.05px">ntative Writing Assignment:</div><div class="abs" style="left:0.5px;top:12px;width:710px;height:200px;background:#fff;border-radius:40px 40px 0 0"></div><div class="abs" style="left:0;top:100px;width:1.5px;height:8px;background:#333"></div><div class="abs" style="left:0;top:140px;width:1.5px;height:12px;background:#333"></div><div class="t" style="left:38px;top:54px;font-size:37.5px;color:#1f1f1f;letter-spacing:0.24px">Authorization required</div><div class="t" style="left:39px;top:126.5px;font-size:21.8px;color:#444746;letter-spacing:0.22px">A script attached to this document needs your permission to run.</div></div>
<div class="abs" style="left:2790.5px;top:322px;width:20.5px;height:177px;border-radius:11px;background:#dadce0"></div>
<div class="abs" style="left:11.5px;top:1782.5px;width:2696px;height:40px;border-radius:12px;background:#dadce0"></div>
<!-- ===== RIGHT PANEL ===== -->
<div class="abs" style="left:2821px;top:153px;width:830px;height:1620px;border-radius:40px;background:#f0f4f9"></div>
<div class="t" style="left:2862.5px;top:202.6px;font-size:40px;font-weight:400;color:#444746;font-family:'Liberation Sans',sans-serif;letter-spacing:0.92px;">Body Paragraph Builder</div>
<svg style="left:3552.3px;top:194.5px;fill:#444746" width="57.9" height="57.9" viewBox="0 0 24 24"><path d="M19 6.41L17.59 5 12 10.59 6.41 5 5 6.41 10.59 12 5 17.59 6.41 19 12 13.41 17.59 19 19 17.59 13.41 12z"/></svg>
<div class="abs" style="left:2861px;top:293px;width:750px;height:1440px;border-radius:25px;overflow:hidden;background:#fcfcfc">
<div class="abs" style="left:0;top:0;width:712px;height:1440px;background:linear-gradient(180deg,#86ebe6 0%,#8eece8 35%,#a2efeb 70%,#b2f1ee 100%)"></div>
</div>
<svg style="left:3580px;top:303.5px" width="24" height="18" viewBox="0 0 24 18"><path d="M12 1.5L22.5 16.5H1.5z" fill="#8b8b8b" stroke="#8b8b8b" stroke-width="3" stroke-linejoin="round"/></svg>
<div class="abs" style="left:3581px;top:337.5px;width:22px;height:529px;border-radius:11px;background:#8b8b8b"></div>
<svg style="left:3580px;top:1704.5px" width="24" height="18" viewBox="0 0 24 18"><path d="M12 16.5L22.5 1.5H1.5z" fill="#8b8b8b" stroke="#8b8b8b" stroke-width="3" stroke-linejoin="round"/></svg>
<svg style="left:2969px;top:363px" width="58" height="55" viewBox="0 0 58 55"><defs><radialGradient id="mg" cx="65%" cy="45%" r="70%"><stop offset="0" stop-color="#ffe066"/><stop offset=".6" stop-color="#fdb92e"/><stop offset="1" stop-color="#f08a3c"/></radialGradient></defs><path d="M12 6c3-5 12-6 16-2 3 3 2 8-2 9l-5 1c-1 5-1 9 1 13 4-7 13-10 22-7 9 3 14 11 12 20-2 8-9 12-18 12H12C4 52 0 47 2 40 4 30 7 16 12 6z" fill="url(#mg)"/></svg>
<div class="t" style="left:3062.5px;top:363.1px;font-size:55px;font-weight:700;color:#05445e;font-family:'Liberation Sans',sans-serif;letter-spacing:-1.18px;">Body Paragraph</div>
<div class="t" style="left:3128.4px;top:439.6px;font-size:55px;font-weight:700;color:#05445e;font-family:'Liberation Sans',sans-serif;letter-spacing:-1.71px;">Builder</div>
<div class="abs" style="left:3044px;top:517.5px;width:346px;height:67px;border-radius:34px;background:#ffd666;border:5px solid #fbb40f"></div>
<div class="t" style="left:3075.6px;top:537.6px;font-size:30px;font-weight:700;color:#05445e;font-family:'Liberation Sans',sans-serif;letter-spacing:0.22px;">6th Grade Evidence</div>
<div class="abs" style="left:2916px;top:610px;width:602px;height:436.5px;border-radius:35px;background:#fff;border:5px solid #cfdee4;border-left:15.5px solid #06c1b6;box-shadow:0 8px 30px rgba(0,140,140,.13)"></div>
<div class="t" style="left:2962px;top:654.4px;font-size:42px;font-weight:700;color:#05445e;font-family:'Liberation Sans',sans-serif;letter-spacing:-1.00px;">Body Paragraph 3:</div>
<div class="t" style="left:2962px;top:709.7px;font-size:42px;font-weight:700;color:#05445e;font-family:'Liberation Sans',sans-serif;letter-spacing:-1.18px;">Physical Health</div>
<div class="abs" style="left:2961px;top:772px;width:521.6px;height:240px;border-radius:30px;background:linear-gradient(90deg,#cbf5f3 0%,#d6f4ea 40%,#f3f0d2 80%,#fff0c9 100%);border:5px dashed #a5c5c1"></div>
<div class="t" style="left:2991.7px;top:809.1px;font-size:33px;font-weight:400;color:#05445e;font-family:'Liberation Sans',sans-serif;letter-spacing:-1.09px;">Use</div>
<div class="t" style="left:3058px;top:809.1px;font-size:33px;font-weight:700;color:#05445e;font-family:'Liberation Sans',sans-serif;letter-spacing:-0.55px;">quotation marks</div>
<div class="t" style="left:3318.5px;top:809.1px;font-size:33px;font-weight:400;color:#05445e;font-family:'Liberation Sans',sans-serif;letter-spacing:1.66px;">for your</div>
<div class="t" style="left:2991.7px;top:853.1px;font-size:33px;font-weight:400;color:#05445e;font-family:'Liberation Sans',sans-serif;letter-spacing:-0.15px;">quote.</div>
<div class="t" style="left:2991.7px;top:899.1px;font-size:33px;font-weight:400;color:#05445e;font-family:'Liberation Sans',sans-serif;letter-spacing:0.72px;">The citation will be added</div>
<div class="t" style="left:2991.7px;top:943.4px;font-size:33px;font-weight:400;color:#05445e;font-family:'Liberation Sans',sans-serif;letter-spacing:0.67px;">automatically for you.</div>
<div class="abs" style="left:2916px;top:1072px;width:602px;height:533.5px;border-radius:35px;background:#fff;border:5px solid #cfdee4;border-left:15.5px solid #06c1b6;box-shadow:0 8px 30px rgba(0,140,140,.13)"></div>
<div class="t" style="left:2964px;top:1116.4px;font-size:42px;font-weight:700;color:#05445e;font-family:'Liberation Sans',sans-serif;letter-spacing:-0.75px;">1) Topic sentence</div>
<div class="t" style="left:2962px;top:1192.3px;font-size:42px;font-weight:700;color:#05445e;font-family:'Liberation Sans',sans-serif;letter-spacing:0.87px;">Starter (editable):</div>
<div class="abs" style="left:2961px;top:1253.5px;width:521.6px;height:99px;border-radius:30px;background:#fff;border:5px solid #cbd9e0"></div>
<div class="t" style="left:3001.6px;top:1286.4px;font-size:35px;font-weight:400;color:#000;font-family:'Liberation Sans',sans-serif;letter-spacing:-0.07px;">Longer recess helps stude</div>
<svg style="left:3446px;top:1294px" width="26" height="18" viewBox="0 0 26 18"><path d="M3 3.5l10 10 10-10" fill="none" stroke="#111" stroke-width="2.6"/></svg>
<div class="abs" style="left:2961px;top:1372px;width:521.6px;height:166px;border-radius:30px;background:#fff;border:5px solid #cbd9e0"></div>
<div class="t" style="left:2992px;top:1405.0px;font-size:32px;font-weight:400;color:#000;font-family:'DejaVu Sans Mono',sans-serif;letter-spacing:0.00px;">Longer recess helps</div>
<div class="t" style="left:2992px;top:1445.0px;font-size:32px;font-weight:400;color:#000;font-family:'DejaVu Sans Mono',sans-serif;letter-spacing:0.00px;">students stay physically</div>
<div class="t" style="left:2992px;top:1485.0px;font-size:32px;font-weight:400;color:#000;font-family:'DejaVu Sans Mono',sans-serif;letter-spacing:0.00px;">healthy because</div>
<div class="abs" style="left:2861px;top:1600px;width:712px;height:133px;overflow:hidden;border-radius:0 0 0 25px"><div class="abs" style="left:55px;top:31.5px;width:602px;height:300px;border-radius:35px;background:#fff;border:5px solid #cfdee4;border-left:15.5px solid #06c1b6"></div></div>
<div class="t" style="left:2964px;top:1673.4px;font-size:42px;font-weight:700;color:#05445e;font-family:'Liberation Sans',sans-serif;letter-spacing:-0.77px;">2) Evidence (quote +</div>
<!-- ===== SIDE ICONS ===== -->
<svg style="left:3737.5px;top:184px" width="47" height="47" viewBox="0 0 47 47"><rect x="0" y="0" width="47" height="47" rx="5" fill="#fff"/><path d="M5 0h31v11H0V5a5 5 0 0 1 5-5z" fill="#4285f4"/><path d="M36 0h6a5 5 0 0 1 5 5v6H36z" fill="#1967d2"/><rect x="0" y="11" width="11" height="25" fill="#4285f4"/><rect x="36" y="11" width="11" height="25" fill="#fbbc04"/><path d="M0 36h11v11H5a5 5 0 0 1-5-5z" fill="#188038"/><rect x="11" y="36" width="25" height="11" fill="#34a853"/><path d="M36 36h11L36 47z" fill="#ea4335"/><rect x="11" y="11" width="25" height="25" fill="#fff"/><text x="23.5" y="31" text-anchor="middle" font-family="Liberation Sans, sans-serif" font-size="19" font-weight="700" fill="#4285f4">31</text></svg>
<svg style="left:3737.8px;top:324.3px" width="47.5" height="47.5" viewBox="0 0 48 48"><rect width="48" height="48" rx="5" fill="#fbbc04"/><circle cx="24" cy="21" r="9" fill="#fff"/><rect x="19" y="28" width="10" height="5" fill="#fff"/><rect x="19.5" y="35" width="9" height="3" rx="1" fill="#fff"/></svg>
<svg style="left:3739px;top:465px" width="46" height="46" viewBox="0 0 46 46"><circle cx="21" cy="25" r="16" fill="none" stroke="#2684fc" stroke-width="7"/><path d="M13 24l7 7L40 9" fill="none" stroke="#0b57d0" stroke-width="7.5" stroke-linecap="round" stroke-linejoin="round"/></svg>
<svg style="left:3743px;top:606px" width="37" height="43" viewBox="0 0 37 43"><rect x="0" y="21" width="37" height="22" rx="11" fill="#8ab4f8"/><rect x="8" y="21" width="21" height="22" rx="9" fill="#0b57d0"/><circle cx="18.5" cy="9" r="9" fill="#0b57d0"/></svg>
<svg style="left:3744.5px;top:744.5px" width="34" height="47" viewBox="0 0 34 47"><path d="M17 0a17 17 0 0 1 17 17c0 12-12 18-17 30C12 35 0 29 0 17A17 17 0 0 1 17 0z" fill="#34a853"/><path d="M17 0a17 17 0 0 1 13 6L17 17 4 6A17 17 0 0 1 17 0z" fill="#1a73e8"/><path d="M4 6l13 11L2 26A17 17 0 0 1 4 6z" fill="#ea4335"/><path d="M30 6a17 17 0 0 1 2 19L17 17z" fill="#4285f4"/><path d="M3 27L17 17l-10 16z" fill="#fbbc04"/><circle cx="17" cy="17" r="6" fill="#fff"/></svg>
<div class="abs" style="left:3736px;top:877.5px;width:50px;height:2.5px;background:#dadce0"></div>
<svg style="left:3744px;top:972.8px" width="34" height="34" viewBox="0 0 34 34"><path d="M17 0v34M0 17h34" stroke="#1f1f1f" stroke-width="4.2"/></svg>
<svg style="left:3753px;top:1730px" width="18" height="26" viewBox="0 0 18 26"><path d="M2.5 1.5L14.5 13 2.5 24.5" fill="none" stroke="#5f6368" stroke-width="4"/></svg>

</body>
</html>
